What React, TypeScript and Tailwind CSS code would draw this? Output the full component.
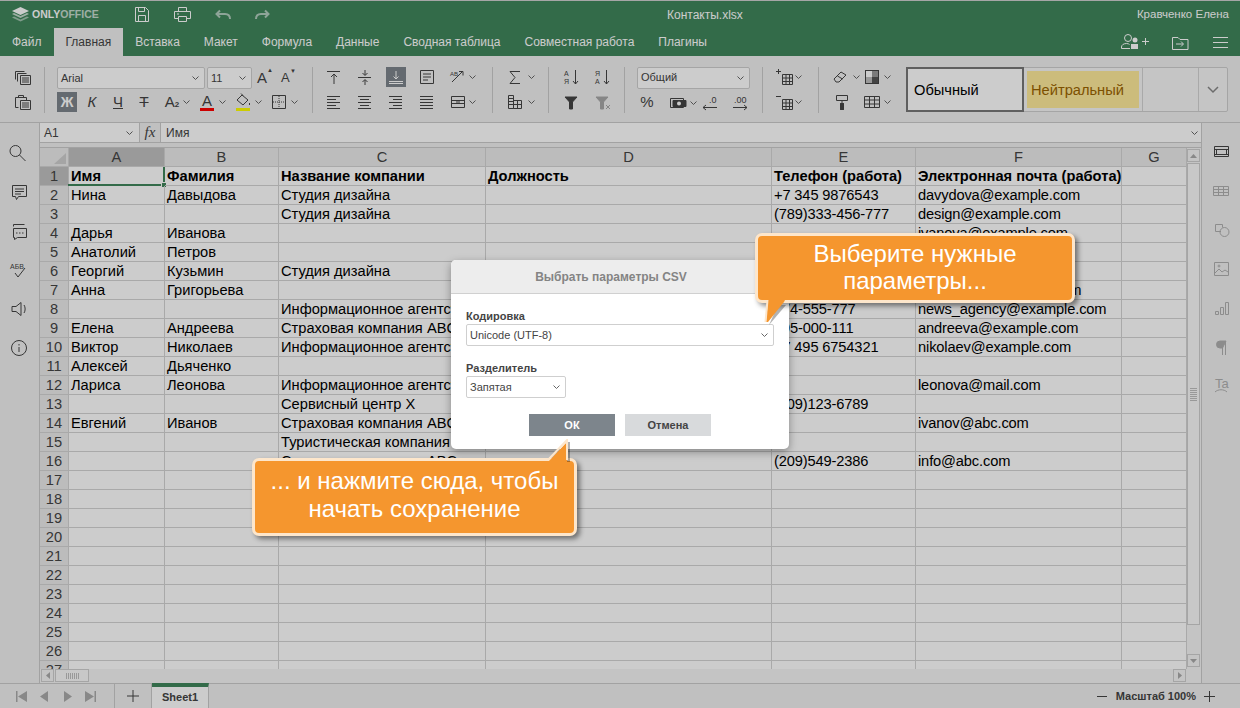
import type { ReactNode } from 'react'

const COLS = 'grid grid-cols-[29px_96px_114px_207px_286px_144px_206px_65px]'

const rows: string[][] = [
  ['Имя', 'Фамилия', 'Название компании', 'Должность', 'Телефон (работа)', 'Электронная почта (работа)'],
  ['Нина', 'Давыдова', 'Студия дизайна', '', '+7 345 9876543', 'davydova@example.com'],
  ['', '', 'Студия дизайна', '', '(789)333-456-777', 'design@example.com'],
  ['Дарья', 'Иванова', '', '', '', 'ivanova@example.com'],
  ['Анатолий', 'Петров', '', '', '', ''],
  ['Георгий', 'Кузьмин', 'Студия дизайна', '', '', ''],
  ['Анна', 'Григорьева', '', '', '', 'grigorieva@example.com'],
  ['', '', 'Информационное агентство', '', '374-555-777', 'news_agency@example.com'],
  ['Елена', 'Андреева', 'Страховая компания ABC', '', '495-000-111', 'andreeva@example.com'],
  ['Виктор', 'Николаев', 'Информационное агентство', '', '+7 495 6754321', 'nikolaev@example.com'],
  ['Алексей', 'Дьяченко', '', '', '', ''],
  ['Лариса', 'Леонова', 'Информационное агентство', '', '', 'leonova@mail.com'],
  ['', '', 'Сервисный центр X', '', '(209)123-6789', ''],
  ['Евгений', 'Иванов', 'Страховая компания ABC', '', '', 'ivanov@abc.com'],
  ['', '', 'Туристическая компания', '', '', ''],
  ['', '', 'Страховая компания ABC', '', '(209)549-2386', 'info@abc.com'],
  ...Array.from({ length: 11 }, () => ['', '', '', '', '', '']),
]

const tabs = ['Файл', 'Главная', 'Вставка', 'Макет', 'Формула', 'Данные', 'Сводная таблица', 'Совместная работа', 'Плагины']

function Ic({ d, w = 20, h = 20, color = '#444', fill, sw = 1, children }: { d?: string; w?: number; h?: number; color?: string; fill?: string; sw?: number; children?: ReactNode }) {
  return (
    <svg width={w} height={h} viewBox={`0 0 ${w} ${h}`} fill="none" stroke={color} strokeWidth={sw} className="shrink-0">
      {d && <path d={d} fill={fill} />}
      {children}
    </svg>
  )
}

function Chev({ className = '' }: { className?: string }) {
  return (
    <svg width="7" height="4" viewBox="0 0 7 4" fill="none" stroke="#666" strokeWidth={1} className={`shrink-0 ${className}`}>
      <path d="M.5.500l3 3 3-3" />
    </svg>
  )
}

function Combo({ w, label }: { w: string; label: string }) {
  return (
    <div className={`${w} h-[22px] border border-[#cfcfcf] rounded-[2px] bg-white flex items-center justify-between pl-[3px] pr-[5px] text-[11px] text-[#444]`}>
      <span>{label}</span>
      <Chev />
    </div>
  )
}

function Sep({ className }: { className: string }) {
  return <div className={`w-px h-[46px] bg-[#cbcbcb] shrink-0 ${className}`} />
}

const lines = (ws: [number, number][]) => ws.map(([x, l], i) => `M${x} ${4.5 + i * 3}h${l}`).join(' ')

const alignLeft = lines([[3, 13], [3, 9], [3, 13], [3, 9], [3, 13]])
const alignCenter = lines([[3, 13], [5, 9], [3, 13], [5, 9], [3, 13]])
const alignRight = lines([[3, 13], [7, 9], [3, 13], [7, 9], [3, 13]])
const alignJust = lines([[3, 13], [3, 13], [3, 13], [3, 13], [3, 13]])

function Sheet() {
  return (
    <div className="w-[1147px] h-[521px] overflow-hidden bg-white text-[14.67px] leading-[18px] text-black">
      <div className={`${COLS} h-[19px] bg-[#ececec] text-[#444]`}>
        <div className="relative border-r border-b border-[#d4d4d4]">
          <svg width="12" height="11" viewBox="0 0 12 11" className="absolute left-[14px] top-[5px]">
            <path d="M12 0v11H0z" fill="#cfcfcf" />
          </svg>
        </div>
        {['A', 'B', 'C', 'D', 'E', 'F', 'G'].map((c, i) => (
          <div key={c} className={`text-center border-r border-b border-[#d4d4d4] ${i === 0 ? 'bg-[#c1c1c1]' : ''}`}>{c}</div>
        ))}
      </div>
      {rows.map((r, i) => (
        <div key={i} className={`${COLS} h-[19px]`}>
          <div className={`text-center text-[#444] border-r border-b border-[#d4d4d4] ${i === 0 ? 'bg-[#c1c1c1]' : 'bg-[#ececec]'}`}>{i + 1}</div>
          {r.concat('').map((t, j) => (
            <div key={j} className={`relative pl-[2px] whitespace-nowrap border-r border-b border-[#d4d4d4] ${i === 0 ? 'font-bold' : j >= 4 ? 'tracking-[-0.14px]' : ''}`}>
              {t}
              {i === 0 && j === 0 && (
                <div className="absolute -left-px top-0 -right-px -bottom-px border-r-2 border-b-2 border-[#40865c]">
                  <span className="absolute -right-[4px] -bottom-[4px] w-[6px] h-[6px] bg-[#40865c] border border-white" />
                </div>
              )}
            </div>
          ))}
        </div>
      ))}
    </div>
  )
}

function Callout({ className, children }: { className: string; children: ReactNode }) {
  return (
    <div className={`absolute bg-[#f5962e] border-[3px] border-[#fde6cb] rounded-[7px] shadow-[3px_3px_5px_rgba(0,0,0,0.45)] text-white text-center text-[24px] ${className}`}>
      {children}
    </div>
  )
}

export default function App() {
  return (
    <div className="relative w-[1240px] h-[708px] overflow-hidden flex flex-col bg-white font-['Liberation_Sans',Arial,sans-serif]">
      {/* header */}
      <div className="h-[56px] shrink-0 border-t border-[#d0d0d0] bg-[#40865c] text-white">
        <div className="h-[27px] flex items-center text-[12px] pl-3">
          <svg width="17" height="15" viewBox="0 0 17 15" className="shrink-0">
            <path d="M8.500 0L17 4 8.500 8 0 4z" fill="#fff" />
            <path d="M0 7l2-.9 6.500 3 6.500-3 2 .9-8.500 4z" fill="#fff" opacity="0.7" />
            <path d="M0 10.500l2-.9 6.500 3 6.500-3 2 .9-8.500 4z" fill="#fff" opacity="0.5" />
          </svg>
          <span className="ml-[3px] w-[103px] text-[10.5px] font-bold">
            ONLY<span className="opacity-70">OFFICE</span>
          </span>
          <Ic w={14} h={15} color="#fff" d="M.5.500h10l3 3v11H.5z M3.500.500v4h6v-4 M3.500 14.500v-6h7v6" />
          <span className="ml-[25px]"><Ic w={17} h={15} color="#fff" d="M4.500 4.500v-4h8v4 M4.500 11.500H.5v-7h16v7h-4 M4.500 9.500h8v5h-8z M3 7h2" /></span>
          <span className="ml-[24px] opacity-60"><Ic w={16} h={12} sw={2} color="#fff" d="M5 1.500L1.500 5 5 8.500 M2 5h8c3 0 5 2 5 5" /></span>
          <span className="ml-[24px] opacity-60"><Ic w={15} h={12} sw={2} color="#fff" d="M10 1.500L13.500 5 10 8.500 M13 5H6c-3 0-5 2-5 5" /></span>
          <span className="ml-[397px] w-[76px] whitespace-nowrap">Контакты.xlsx</span>
          <span className="ml-auto pr-[11px] text-[11.5px]">Кравченко Елена</span>
        </div>
        <div className="h-[28px] flex items-stretch text-[12px]">
          {tabs.map((t, i) => (
            <div key={t} className={`px-3 flex items-center ${i === 1 ? 'bg-[#f1f1f1] text-[#444]' : ''}`}>{t}</div>
          ))}
          <div className="ml-auto flex items-center pr-3">
            <Ic w={28} h={16} color="#fff" d="M3.500 4a3.500 3.500 0 1 1 7 0 3.500 3.500 0 0 1-7 0z M.5 14.500v-1.500c0-2 2-3.500 5-3.500 1.500 0 2.500.5 3 1 M.5 14.500h8.500 M21 7.500h7 M24.500 4v7">
              <circle cx="14" cy="6" r="2.500" fill="#fff" stroke="none" />
              <path d="M10 10h7v5h-7z" fill="#fff" stroke="none" />
            </Ic>
            <span className="ml-[23px]"><Ic w={17} h={15} color="#fff" d="M.5 2.500v12h15.500v-10H8l-2-2z M4 9h7 M9 6.500L11.500 9 9 11.500" /></span>
            <span className="ml-[24px]"><Ic w={15} h={12} color="#fff" d="M0 1.500h15 M0 6.500h15 M0 11.500h15" /></span>
          </div>
        </div>
      </div>

      {/* toolbar */}
      <div className="h-[67px] shrink-0 bg-[#f1f1f1] border-b border-[#cbcbcb] flex items-center pl-3 pt-[1px]">
        <div className="flex flex-col gap-[5px] w-[20px]">
          <Ic d="M8.500 8.500h10v9h-10z M10 11h7 M10 13h7 M10 15h7 M5.500 14.500v-8h9 M3.500 12.500v-8h9" />
          <Ic d="M8.500 8.500h10v9h-10z M10 11h7 M10 13h7 M10 15h7 M6.500 15.500h-3v-10h11v3 M6.500 5.500v-2h5v2" />
        </div>
        <Sep className="ml-[12px]" />
        <div className="ml-[12px] flex flex-col gap-[3px] w-[246px]">
          <div className="flex items-center h-[22px]">
            <Combo w="w-[148px]" label="Arial" />
            <div className="ml-[2px]"><Combo w="w-[45px]" label="11" /></div>
            <span className="ml-[5px] w-[24px] text-[15px] text-[#444] relative">A<span className="absolute top-[-1px] left-[10px] text-[6px]">▲</span></span>
            <span className="text-[13px] text-[#444] relative">A<span className="absolute top-[-1px] left-[9px] text-[6px]">▼</span></span>
          </div>
          <div className="flex items-center h-[20px] text-[#444] text-[15px]">
            <span className="w-[20px] h-[20px] bg-[#7d858c] text-white font-bold text-[14px] flex items-center justify-center">Ж</span>
            <span className="ml-[5px] w-[20px] text-center italic">К</span>
            <span className="ml-[6px] w-[20px] text-center underline">Ч</span>
            <span className="ml-[6px] w-[20px] text-center line-through">Т</span>
            <span className="ml-[8px] w-[20px] text-center whitespace-nowrap">A<span className="text-[8px] font-bold">2</span></span>
            <Chev className="ml-[1px]" />
            <span className="ml-[7px] w-[20px] flex flex-col items-center leading-[15px]">A<span className="w-[14px] h-[3px] bg-[#f00]" /></span>
            <Chev className="ml-[2px]" />
            <span className="ml-[7px] w-[20px] flex flex-col items-center">
              <Ic h={14} w={16} d="M2 7l5-5 6 5-5 5z M6 0.500l2 2 M14.500 10v2" />
              <span className="w-[14px] h-[3px] bg-[#ff0] mt-[1px]" />
            </span>
            <Chev className="ml-[2px]" />
            <span className="ml-[7px]"><Ic d="M3.500 3.500h13v13h-13z" color="#444"><path d="M10 4v12M4 10h12" strokeDasharray="1 1" /></Ic></span>
            <Chev className="ml-[2px]" />
          </div>
        </div>
        <Sep className="ml-[9px]" />
        <div className="ml-[11px] flex flex-col gap-[5px] w-[157px]">
          <div className="flex items-center gap-[11px]">
            <Ic d="M3 4.500h13 M10 17V7 M7 10l3-3 3 3" />
            <Ic d="M3 10.500h13 M10 3v5 M7.500 6L10 8.500 12.500 6 M10 18v-5 M7.500 15l2.500-2.500L12.500 15" />
            <span className="bg-[#7d858c]"><Ic color="#fff" d="M3 16.500h14 M3 14.500h14 M10 4v8 M7.500 9.500L10 12l2.500-2.500" /></span>
            <Ic d="M3.500 3.500h13v13h-13z M6 7h8 M6 10h8 M6 13h5" />
            <Ic d="M4 15L14 5 M11 4.500h4v4"><text x="2" y="9" fontSize="6" stroke="none" fill="#444">AB</text></Ic>
            <Chev className="ml-[-10px]" />
          </div>
          <div className="flex items-center gap-[11px]">
            <Ic d={alignLeft} />
            <Ic d={alignCenter} />
            <Ic d={alignRight} />
            <Ic d={alignJust} />
            <Ic d="M3.500 4.500h13v11h-13z M4 8.500h12 M4 11.500h12 M8 10h4" />
            <Chev className="ml-[-10px]" />
          </div>
        </div>
        <Sep className="ml-[11px]" />
        <div className="ml-[12px] flex flex-col gap-[5px] w-[33px]">
          <div className="flex items-center gap-[3px]">
            <Ic d="M15 4.500H5l5 6-5 6h10" />
            <Chev />
          </div>
          <div className="flex items-center gap-[3px]">
            <Ic d="M3.500 3.500h5v13h-5z M8.500 8.500h8v8h-8z M3 6.500h5 M3 9.500h5 M3 12.500h5 M12.500 8v8 M9 12.500h7" />
            <Chev />
          </div>
        </div>
        <Sep className="ml-[10px]" />
        <div className="ml-[12px] flex flex-col gap-[5px] w-[51px]">
          <div className="flex gap-[11px]">
            <Ic d="M14.500 3v14 M12 14l2.500 3 2.500-3"><text x="3" y="9" fontSize="7" stroke="none" fill="#444">А</text><text x="3" y="17" fontSize="7" stroke="none" fill="#444">Я</text></Ic>
            <Ic d="M14.500 3v14 M12 14l2.500 3 2.500-3"><text x="3" y="9" fontSize="7" stroke="none" fill="#444">Я</text><text x="3" y="17" fontSize="7" stroke="none" fill="#444">А</text></Ic>
          </div>
          <div className="flex gap-[11px]">
            <Ic d="M4 5h12l-4.500 5v7h-3v-7z" fill="#444" />
            <Ic color="#a8a8a8" d="M4 5h12l-4.500 5v7h-3v-7z" fill="#a8a8a8"><path d="M14 13l4 4M18 13l-4 4" /></Ic>
          </div>
        </div>
        <Sep className="ml-[12px]" />
        <div className="ml-[12px] flex flex-col gap-[4px] w-[113px]">
          <Combo w="w-[113px]" label="Общий" />
          <div className="flex items-center text-[#444] h-[20px]">
            <span className="w-[20px] text-center text-[15px]">%</span>
            <span className="ml-[11px]"><Ic d="M2.500 5.500h13v9h-13z"><path d="M5 7.500h13v6H5z" fill="#444" /><circle cx="11" cy="10.500" r="2" fill="#fff" stroke="none" /></Ic></span>
            <Chev className="ml-[2px]" />
            <span className="ml-[3px]"><Ic d="M3 14.500h14 M6 12l-3 2.500L6 17"><text x="9" y="10" fontSize="9" stroke="none" fill="#444">.0</text></Ic></span>
            <span className="ml-[10px]"><Ic d="M3 14.500h14 M14 12l3 2.500-3 2.500"><text x="4" y="10" fontSize="9" stroke="none" fill="#444">.00</text></Ic></span>
          </div>
        </div>
        <Sep className="ml-[12px]" />
        <div className="ml-[12px] flex flex-col gap-[5px] w-[32px]">
          <div className="flex items-center">
            <Ic d="M7.500 7.500h10v10h-10z M7.500 11h10 M7.500 14.500h10 M11 8v10 M14.500 8v10 M1 4.500h5 M3.500 2v5" />
            <Chev />
          </div>
          <div className="flex items-center">
            <Ic d="M7.500 7.500h10v10h-10z M7.500 11h10 M7.500 14.500h10 M11 8v10 M14.500 8v10 M1 4.500h5" />
            <Chev />
          </div>
        </div>
        <Sep className="ml-[11px]" />
        <div className="ml-[12px] flex flex-col gap-[5px] w-[65px]">
          <div className="flex items-center">
            <Ic d="M3 12l7-7 5 3-7 7H5z M6.500 9l5 3" />
            <Chev className="ml-[2px]" />
            <span className="ml-[5px] w-[14px] h-[14px] border border-[#444] grid grid-cols-2 grid-rows-2">
              <i className="bg-white" /><i className="bg-[#9a9a9a]" /><i className="bg-[#c0c0c0]" /><i className="bg-[#555]" />
            </span>
            <Chev className="ml-[5px]" />
          </div>
          <div className="flex items-center">
            <Ic d="M5.500 3.500h11v5h-11z M11 8.500v3 M9.500 11.500h3v6h-3z"><path d="M9.500 11.500h3v6h-3z" fill="#444" /></Ic>
            <span className="ml-[11px]"><Ic d="M2.500 4.500h15v11h-15z M2.500 8h15 M2.500 12h15 M7.500 5v10 M12.500 5v10" /></span>
            <Chev className="ml-[2px]" />
          </div>
        </div>
        {/* cell styles */}
        <div className="ml-[10px] w-[322px] h-[45px] flex border border-[#cfcfcf] rounded-[2px] bg-[#f7f7f7] text-[14.67px]">
          <div className="w-[118px] -my-px -ml-px border-2 border-[#777] bg-white flex items-center pl-[6px] text-black">Обычный</div>
          <div className="w-[119px] border-r border-[#d4d4d4] p-[3px]">
            <div className="h-full bg-[#ffeb9c] text-[#9c6500] flex items-center pl-[4px]">Нейтральный</div>
          </div>
          <div className="w-[56px] border-r border-[#d4d4d4]" />
          <div className="flex-1 flex items-center justify-center">
            <svg width="12" height="8" viewBox="0 0 12 8" fill="none" stroke="#888" strokeWidth={1.500}><path d="M1 1l5 5 5-5" /></svg>
          </div>
        </div>
      </div>

      {/* main */}
      <div className="flex-1 flex min-h-0">
        <div className="w-[40px] shrink-0 bg-[#f1f1f1] border-r border-[#cbcbcb] flex flex-col items-center pt-[20px] pr-[1px] gap-[19px]">
          <Ic d="M12 8a5.500 5.500 0 1 1-11 0 5.500 5.500 0 0 1 11 0z M10.500 12l6 6" />
          <Ic d="M3.500 3.500h14v11h-8l-2 3-1-3h-3z M6 7h9 M6 9.500h9 M6 12h6" />
          <Ic d="M4.500 7.500h13v9h-9l-3 2v-2h-1z M4.500 5.500v-2h11 M7 12h1.500 M10 12h1.500 M13 12h1.500" />
          <Ic d="M6 13l3 4 7-9"><text x="1" y="9" fontSize="7" stroke="none" fill="#444">АБВ</text></Ic>
          <Ic d="M3 7.500h4l5-4v13l-5-4H3z M15 6c1.500 2 1.500 6 0 8" />
          <Ic d="M17.500 10a7.500 7.500 0 1 1-15 0 7.500 7.500 0 0 1 15 0z M10 9v5 M10 6v1.500" />
        </div>

        <div className="flex-1 min-w-0 flex flex-col">
          <div className="h-[20px] flex border-b border-[#cbcbcb] bg-white text-[12px] text-[#444]">
            <div className="w-[100px] flex items-center justify-between pl-[4px] pr-[6px] border-r border-[#cbcbcb]">
              <span>A1</span>
              <Chev />
            </div>
            <div className="w-[21px] bg-[#f1f1f1] border-r border-[#cbcbcb] flex items-center justify-center font-['Liberation_Serif',serif] italic text-[15px]">fx</div>
            <div className="flex-1 flex items-center justify-between pl-[5px] pr-[3px]">
              <span>Имя</span>
              <Chev />
            </div>
          </div>
          <div className="h-[5px] bg-[#f1f1f1] border-b border-[#cbcbcb]" />
          <div className="flex-1 flex min-h-0">
            <div className="flex flex-col w-[1147px]">
              <Sheet />
              {/* horizontal scrollbar */}
              <div className="flex-1 bg-[#f5f5f5] flex items-center pl-[1px] pb-px">
                <div className="w-[13px] h-[13px] border border-[#cfcfcf] flex items-center justify-center">
                  <svg width="4" height="7" viewBox="0 0 4 7"><path d="M4 0L0 3.500 4 7z" fill="#aaa" /></svg>
                </div>
                <div className="w-[34px] h-[13px] ml-[1px] bg-[#fafafa] border border-[#cfcfcf] flex items-center justify-center gap-px">
                  {[0, 1, 2, 3, 4, 5, 6].map((n) => <span key={n} className="w-px h-[6px] bg-[#c0c0c0]" />)}
                </div>
                <div className="ml-auto mr-[1px] w-[13px] h-[13px] border border-[#cfcfcf] flex items-center justify-center">
                  <svg width="4" height="7" viewBox="0 0 4 7"><path d="M0 0l4 3.500L0 7z" fill="#aaa" /></svg>
                </div>
              </div>
            </div>
            {/* vertical scrollbar */}
            <div className="w-[14px] bg-[#f5f5f5] flex flex-col pt-px pr-px items-stretch">
              <div className="h-[13px] border border-[#cfcfcf] flex items-center justify-center">
                <svg width="7" height="4" viewBox="0 0 7 4"><path d="M0 4l3.500-4L7 4z" fill="#aaa" /></svg>
              </div>
              <div className="h-[462px] mt-px bg-[#fafafa] border border-[#cfcfcf] flex flex-col items-center justify-center gap-px">
                {[0, 1, 2, 3, 4, 5, 6].map((n) => <span key={n} className="w-[7px] h-px bg-[#c0c0c0]" />)}
              </div>
              <div className="h-[13px] mt-[29px] border border-[#cfcfcf] flex items-center justify-center">
                <svg width="7" height="4" viewBox="0 0 7 4"><path d="M0 0l3.500 4L7 0z" fill="#aaa" /></svg>
              </div>
            </div>
          </div>
        </div>

        <div className="w-[39px] shrink-0 bg-[#f1f1f1] border-l border-[#cbcbcb] flex flex-col items-center pt-[19px] gap-[19px]">
          <Ic d="M3.500 4.500h14v10h-14z M5.500 7.500h10v5h-10z M3 7.500h3 M15 7.500h3 M3 12.500h3 M15 12.500h3" />
          <Ic color="#b0b0b0" d="M2.500 5.500h15v9h-15z M2.500 8.500h15 M2.500 11.500h15 M7.500 6v8 M12.500 6v8" />
          <Ic color="#b0b0b0" d="M10 11.500H4.500v-7h7v3 M18 12a4.500 4.500 0 1 1-9 0 4.500 4.500 0 0 1 9 0z" />
          <Ic color="#b0b0b0" d="M3.500 3.500h14v13h-14z M4 14l4-4 3 3 3-2 3 2 M9 7a1 1 0 1 1-2 0 1 1 0 0 1 2 0z" />
          <Ic color="#b0b0b0" d="M4.500 13.500h3v3h-3z M9.500 9.500h3v7h-3z M14.500 4.500h3v12h-3z" />
          <Ic color="#b0b0b0" d="M11.500 4v14 M14.500 4v14 M15 4H9a3.500 3.500 0 0 0 0 7h2.500z" fill="#b0b0b0" />
          <Ic color="#b0b0b0" d="M4 16c3-3 9-3 12 0"><text x="4" y="12" fontSize="13" stroke="none" fill="#b0b0b0">Ta</text></Ic>
        </div>
      </div>

      {/* status bar */}
      <div className="h-[25px] shrink-0 bg-[#f1f1f1] border-t border-[#cbcbcb] flex items-stretch text-[#444]">
        <div className="w-[115px] border-r border-[#cbcbcb] flex items-center pl-[16px] gap-[12px]">
          <svg width="11" height="11" viewBox="0 0 11 11" fill="#aaa"><path d="M0 0h1.500v11H0z M11 0L2 5.500 11 11z" /></svg>
          <svg width="11" height="11" viewBox="0 0 11 11" fill="#aaa"><path d="M9 0L1 5.500 9 11z" /></svg>
          <svg width="11" height="11" viewBox="0 0 11 11" fill="#aaa"><path d="M2 0l8 5.500L2 11z" /></svg>
          <svg width="11" height="11" viewBox="0 0 11 11" fill="#aaa"><path d="M0 0l9 5.500L0 11z M9.500 0H11v11H9.500z" /></svg>
        </div>
        <div className="w-[37px] border-r border-[#cbcbcb] flex items-center justify-center">
          <Ic w={12} h={12} color="#444" d="M6 0v12 M0 6h12" />
        </div>
        <div className="w-[57px] -mt-px bg-white border-t-[4px] border-[#40865c] border-r border-r-[#cbcbcb] flex items-center justify-center text-[11px] font-bold">Sheet1</div>
        <div className="ml-auto flex items-center pr-[25px] text-[11px] font-bold">
          <Ic w={10} h={10} color="#444" d="M0 5.500h10" />
          <span className="ml-[9px] mr-[8px]">Масштаб 100%</span>
          <Ic w={11} h={11} color="#444" d="M5.500 0v11 M0 5.500h11" />
        </div>
      </div>

      {/* modal backdrop */}
      <div className="absolute inset-0 bg-black/20" />

      {/* dialog */}
      <div className="absolute left-[451px] top-[260px] w-[338px] h-[189px] rounded-[5px] bg-white shadow-[0_3px_8px_rgba(0,0,0,0.35)] overflow-hidden text-[#444]">
        <div className="h-[34px] bg-[#ededed] border-b border-[#d0d0d0] flex items-center justify-center pr-[18px] text-[12px] font-bold text-[#848484]">
          Выбрать параметры CSV
        </div>
        <div className="px-[15px] pt-[16px]">
          <div className="text-[11px] font-bold leading-[13px] mb-[1px]">Кодировка</div>
          <Combo w="w-[308px]" label="Unicode (UTF-8)" />
          <div className="text-[11px] font-bold leading-[13px] mt-[16px] mb-[1px]">Разделитель</div>
          <Combo w="w-[100px]" label="Запятая" />
          <div className="mt-[16px] flex justify-center gap-[10px] text-[11px] font-bold">
            <button className="w-[86px] h-[22px] bg-[#7d858c] text-white">ОК</button>
            <button className="w-[86px] h-[22px] bg-[#d8dadc]">Отмена</button>
          </div>
        </div>
      </div>

      {/* callouts */}
      <Callout className="left-[755px] top-[233px] w-[320px] h-[70px] pt-[4px] leading-[27px]">
        Выберите нужные<br />параметры...
      </Callout>
      <svg width="28" height="30" viewBox="0 0 28 30" className="absolute left-[762px] top-[298px]">
        <path d="M7 27L24 7h-8z" fill="#000" opacity="0.3" />
        <path d="M6 0v3l-2 21 2 0 L22 4l2-4z" fill="#f5962e" />
        <path d="M5.500 2L3.500 24" fill="none" stroke="#fde6cb" strokeWidth={2} />
      </svg>
      <Callout className="left-[252px] top-[458px] w-[325px] h-[78px] pt-[6px] leading-[28px]">
        ... и нажмите сюда, чтобы<br />начать сохранение
      </Callout>
      <svg width="26" height="24" viewBox="0 0 26 24" className="absolute left-[548px] top-[439px]">
        <path d="M19 3h3v20h-3z" fill="#000" opacity="0.3" />
        <path d="M0 23L19 3v20z" fill="#f5962e" />
        <path d="M0 21L19 1v20" fill="none" stroke="#fde6cb" strokeWidth={2} />
      </svg>
    </div>
  )
}
